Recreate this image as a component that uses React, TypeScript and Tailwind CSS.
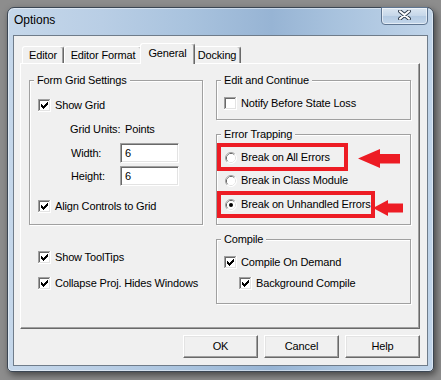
import React from "react";

const CheckBox = ({ checked }: { checked: boolean }) => (
  <svg width="13" height="13" viewBox="0 0 13 13" shapeRendering="crispEdges" className="block shrink-0">
    <rect x="0" y="0" width="13" height="13" fill="#ffffff" />
    <path d="M0 0h12v1H1v11H0z" fill="#a0a0a0" />
    <path d="M1 1h10v1H2v9H1z" fill="#696969" />
    <path d="M1 11h11v1H1z M11 1h1v10h-1z" fill="#e3e3e3" />
    <rect x="2" y="2" width="9" height="9" fill="#ffffff" />
    {checked && (
      <path
        d="M9 3h1v1h-1z M8 4h2v1h-2z M3 5h1v1h-1z M7 5h3v1h-3z M3 6h2v1h-2z M6 6h3v1h-3z M3 7h5v1h-5z M4 8h3v1h-3z M5 9h1v1h-1z"
        fill="#000000"
      />
    )}
  </svg>
);

const Radio = ({ checked }: { checked: boolean }) => (
  <svg width="12" height="12" viewBox="0 0 12 12" className="block shrink-0">
    <circle cx="6" cy="6" r="5.5" fill="#ffffff" />
    <path d="M2.11 9.89A5.5 5.5 0 0 1 9.89 2.11" fill="none" stroke="#a0a0a0" strokeWidth="1" />
    <path d="M9.89 2.11A5.5 5.5 0 0 1 2.11 9.89" fill="none" stroke="#ffffff" strokeWidth="1" />
    <path d="M2.82 9.18A4.5 4.5 0 0 1 9.18 2.82" fill="none" stroke="#696969" strokeWidth="1" />
    <path d="M9.18 2.82A4.5 4.5 0 0 1 2.82 9.18" fill="none" stroke="#e3e3e3" strokeWidth="1" />
    <circle cx="6" cy="6" r="4" fill="#ffffff" />
    {checked && <circle cx="6" cy="6" r="2" fill="#000000" />}
  </svg>
);

const Group = ({
  title,
  className,
  children,
}: {
  title: string;
  className: string;
  children: React.ReactNode;
}) => (
  <div
    className={`flex flex-col border border-[#a0a0a0] shadow-[1px_1px_0_#ffffff,inset_1px_1px_0_#ffffff] ${className}`}
  >
    <span className="-mt-[7px] ml-[4px] h-[13px] self-start bg-[#f0f0f0] px-[3px] leading-[13px] whitespace-nowrap">
      {title}
    </span>
    {children}
  </div>
);

const Input = ({ value }: { value: string }) => (
  <div className="flex h-[20px] w-[59px] items-center border border-t-[#a0a0a0] border-l-[#a0a0a0] border-b-white border-r-white bg-white pl-[4px] shadow-[inset_1px_1px_0_#696969,inset_-1px_-1px_0_#e3e3e3]">
    {value}
  </div>
);

const Btn = ({ label }: { label: string }) => (
  <button
    type="button"
    className="flex h-[23px] w-[75px] items-center justify-center border border-t-white border-l-white border-b-[#696969] border-r-[#696969] bg-[#f0f0f0] text-[11px] leading-[13px] tracking-[-0.15px] shadow-[inset_-1px_-1px_0_#a0a0a0,inset_1px_1px_0_#e3e3e3]"
  >
    {label}
  </button>
);

const Tab = ({
  label,
  w,
  selected,
}: {
  label: string;
  w: string;
  selected?: boolean;
}) =>
  selected ? (
    <div
      className={`relative z-10 -mx-[2px] -mb-[1px] h-[21px] ${w} rounded-t-[3px] border-t border-l border-r border-t-white border-l-white border-r-[#696969] bg-[#f0f0f0] pt-[3px] text-center leading-[13px] shadow-[inset_-1px_0_0_#a0a0a0]`}
    >
      {label}
    </div>
  ) : (
    <div
      className={`h-[17px] ${w} rounded-t-[3px] border-t border-l border-r border-t-white border-l-white border-r-[#696969] bg-[#f0f0f0] pt-[2px] text-center leading-[13px] whitespace-nowrap shadow-[inset_-1px_0_0_#a0a0a0]`}
    >
      {label}
    </div>
  );

export default function App() {
  return (
    <div className="relative h-[380px] w-[441px] overflow-hidden bg-[#8d8d8d] pl-[7px] pt-[7px] font-['Liberation_Sans',Arial,sans-serif] text-[11px] leading-[13px] tracking-[-0.15px] text-black">
      <div className="flex h-[365px] w-[427px] flex-col rounded-t-[7px] rounded-b-[5px] border border-[#3b4653] bg-[linear-gradient(90deg,#c5d7ea_0%,#b9cee5_22%,#a9c3de_42%,#97b4d4_62%,#a9c3de_78%,#c0d4e9_100%)] shadow-[inset_0_0_0_1px_rgba(255,255,255,0.45),2px_3px_7px_rgba(0,0,0,0.5)]">
        {/* title bar */}
        <div className="flex h-[27px] justify-between pl-[6px] pr-[5px]">
          <span className="mt-[5px] text-[12px] leading-[15px] tracking-normal text-[#000000]">Options</span>
          <div className="-mt-[1px] flex h-[18px] w-[47px] items-center justify-center rounded-b-[4px] border border-[#5f7590] bg-[linear-gradient(180deg,#dbe6f1_0%,#c6d7e9_48%,#b4cae2_52%,#c3d6ea_100%)] pb-[2px] shadow-[inset_0_0_0_1px_rgba(255,255,255,0.55)]">
            <svg width="13" height="10" viewBox="0 0 13 10">
              <path d="M2 1.2L11 8.8M11 1.2L2 8.8" stroke="#2d3a4a" strokeWidth="3.8" strokeLinecap="round" fill="none" />
              <path d="M2 1.2L11 8.8M11 1.2L2 8.8" stroke="#ffffff" strokeWidth="2" strokeLinecap="round" fill="none" />
            </svg>
          </div>
        </div>
        {/* client area */}
        <div className="ml-[5px] flex h-[331px] w-[415px] flex-col border border-[#6f7c8a] bg-[#f0f0f0] pl-[6px] pt-[7px]">
          {/* tabs */}
          <div className="relative z-10 flex h-[20px] items-end pl-[2px]">
            <Tab label="Editor" w="w-[42px]" />
            <Tab label="Editor Format" w="w-[78px]" />
            <Tab label="General" w="w-[55px]" selected />
            <Tab label="Docking" w="w-[48px]" />
          </div>
          {/* panel */}
          <div className="flex h-[266px] w-[400px] gap-[13px] border border-t-white border-l-white border-b-[#696969] border-r-[#696969] pl-[8px] pt-[16px] shadow-[inset_-1px_-1px_0_#a0a0a0]">
            {/* left column */}
            <div className="flex w-[174px] flex-col">
              <Group title="Form Grid Settings" className="h-[145px]">
                <div className="flex flex-col pl-[8px]">
                  <div className="mt-[12px] flex h-[13px] items-center gap-[4px] whitespace-nowrap">
                    <CheckBox checked />
                    <span>Show Grid</span>
                  </div>
                  <div className="ml-[32px] mt-[11px] flex h-[13px] whitespace-nowrap">
                    <span className="w-[55px]">Grid Units:</span>
                    <span>Points</span>
                  </div>
                  <div className="ml-[33px] mt-[7px] flex h-[20px] items-center">
                    <span className="w-[49px]">Width:</span>
                    <Input value="6" />
                  </div>
                  <div className="ml-[33px] mt-[3px] flex h-[20px] items-center">
                    <span className="w-[49px]">Height:</span>
                    <Input value="6" />
                  </div>
                  <div className="mt-[14px] flex h-[13px] items-center gap-[4px] whitespace-nowrap">
                    <CheckBox checked />
                    <span>Align Controls to Grid</span>
                  </div>
                </div>
              </Group>
              <div className="ml-[9px] mt-[26px] flex h-[13px] items-center gap-[4px] whitespace-nowrap">
                <CheckBox checked />
                <span>Show ToolTips</span>
              </div>
              <div className="ml-[9px] mt-[13px] flex h-[13px] items-center gap-[4px] whitespace-nowrap">
                <CheckBox checked />
                <span>Collapse Proj. Hides Windows</span>
              </div>
            </div>
            {/* right column */}
            <div className="flex w-[195px] flex-col">
              <Group title="Edit and Continue" className="h-[40px]">
                <div className="mt-[10px] flex h-[13px] items-center gap-[4px] whitespace-nowrap pl-[7px]">
                  <CheckBox checked={false} />
                  <span>Notify Before State Loss</span>
                </div>
              </Group>
              <Group title="Error Trapping" className="mt-[14px] h-[91px]">
                <div className="flex flex-col pl-[8px]">
                  <div className="mt-[10px] flex h-[13px] items-center gap-[4px] whitespace-nowrap">
                    <Radio checked={false} />
                    <span>Break on All Errors</span>
                  </div>
                  <div className="mt-[10px] flex h-[13px] items-center gap-[4px] whitespace-nowrap">
                    <Radio checked={false} />
                    <span>Break in Class Module</span>
                  </div>
                  <div className="mt-[11px] flex h-[13px] items-center gap-[4px] whitespace-nowrap">
                    <Radio checked />
                    <span>Break on Unhandled Errors</span>
                  </div>
                </div>
              </Group>
              <Group title="Compile" className="mt-[14px] h-[65px]">
                <div className="mt-[10px] flex h-[13px] items-center gap-[4px] whitespace-nowrap pl-[7px]">
                  <CheckBox checked />
                  <span>Compile On Demand</span>
                </div>
                <div className="mt-[8px] flex h-[13px] items-center gap-[4px] whitespace-nowrap pl-[22px]">
                  <CheckBox checked />
                  <span>Background Compile</span>
                </div>
              </Group>
            </div>
          </div>
          {/* buttons */}
          <div className="mt-[6px] flex w-[400px] justify-end gap-[6px]">
            <Btn label="OK" />
            <Btn label="Cancel" />
            <Btn label="Help" />
          </div>
        </div>
      </div>

      {/* annotations */}
      <div className="absolute left-[217px] top-[143px] h-[28px] w-[131px] border-[4px] border-[#ed1c24]" />
      <div className="absolute left-[217px] top-[191px] h-[27px] w-[158px] border-[4px] border-[#ed1c24]" />
      <svg className="pointer-events-none absolute left-0 top-0" width="441" height="380" viewBox="0 0 441 380">
        <path d="M358 158.5L380 149L380 154L400 154L400 163.5L380 163.5L380 168Z" fill="#ed1c24" />
        <path d="M373 208L388 200L388 203.5L403 203.5L403 212.5L388 212.5L388 216Z" fill="#ed1c24" />
      </svg>
    </div>
  );
}
